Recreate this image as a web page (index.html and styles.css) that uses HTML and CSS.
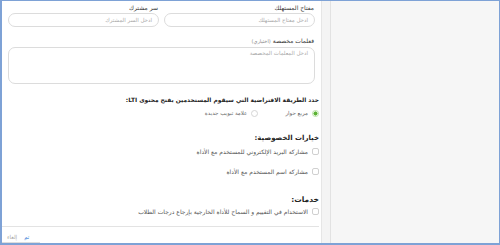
FILE: index.html
```html
<!DOCTYPE html>
<html lang="ar">
<head>
<meta charset="utf-8">
<link rel="stylesheet" href="styles.css">
</head>
<body>
<div class="frame">
  <main class="main" dir="rtl">
    <div class="row">
      <div class="field">
        <label class="label">مفتاح المستهلك</label>
        <div class="input">ادخل مفتاح المستهلك</div>
      </div>
      <div class="field">
        <label class="label">سر مشترك</label>
        <div class="input">ادخل السر المشترك</div>
      </div>
    </div>
    <div class="field wide">
      <label class="label">فعلمات مخصصة <span class="opt">(اختياري)</span></label>
      <div class="textarea">ادخل المعلمات المخصصة</div>
    </div>
    <div class="question">حدد الطريقة الافتراضية التي سيقوم المستخدمين بفتح محتوى LTI:</div>
    <div class="radios">
      <span class="choice"><span class="radio on"></span>مربع حوار</span>
      <span class="choice"><span class="radio"></span>علامة تبويب جديدة</span>
    </div>
    <h3 class="heading">خيارات الخصوصية:</h3>
    <div class="check"><span class="box"></span>مشاركة البريد الإلكتروني للمستخدم مع الأداة</div>
    <div class="check second"><span class="box"></span>مشاركة اسم المستخدم مع الأداة</div>
    <h3 class="heading services">خدمات:</h3>
    <div class="check last"><span class="box"></span>الاستخدام في التقييم و السماح للأداة الخارجية بإرجاع درجات الطلاب</div>
    <div class="footer">
      <span class="done">تم</span>
      <span class="cancel">إلغاء</span>
    </div>
    <div class="hscroll"></div>
  </main>
  <div class="track"></div>
  <aside class="side"></aside>
</div>
</body>
</html>
```
FILE: styles.css
```css
* { box-sizing: border-box; }
html, body { margin: 0; padding: 0; }
body {
  width: 500px;
  height: 245px;
  overflow: hidden;
  font-family: "DejaVu Sans", "Noto Sans", sans-serif;
  background: #fff;
}
.frame {
  width: 500px;
  height: 245px;
  border-top: 1px solid #7ea2d6;
  border-left: 2px solid #7ea2d6;
  border-right: 1px solid #7ea2d6;
  border-bottom: 2px solid #7ea2d6;
  display: flex;
}
.main {
  width: 320px;
  flex: none;
  background: #fff;
  padding: 2px 6px 0 6px;
  position: relative;
  border-right: 1px solid #e6e6e6;
}
.row {
  display: flex;
  gap: 5px;
}
.field { flex: 1; display: flex; flex-direction: column; }
.label {
  font-size: 6px;
  color: #333;
  line-height: 9px;
  padding-right: 1px;
  margin-bottom: 1px;
}
.opt { color: #888; font-size: 5px; }
.input {
  height: 14px;
  border: 1px solid #dcdcdc;
  border-radius: 7px;
  font-size: 5.5px;
  color: #aaa;
  line-height: 12px;
  padding: 0 6px;
}
.wide { margin-top: 9px; }
.textarea {
  height: 37px;
  border: 1px solid #dcdcdc;
  border-radius: 7px;
  font-size: 5.5px;
  color: #aaa;
  line-height: 9px;
  padding: 1px 6px;
}
.question {
  margin-top: 12px;
  margin-right: -4px;
  font-size: 5.9px;
  font-weight: bold;
  color: #222;
  line-height: 9px;
}
.radios {
  display: flex;
  gap: 27px;
  margin-top: 4px;
  margin-right: -4px;
  font-size: 5.5px;
  color: #666;
  line-height: 9px;
}
.choice { display: flex; align-items: center; gap: 4px; }
.radio {
  width: 7px; height: 7px;
  border-radius: 50%;
  border: 1px solid #d5d5d5;
  background: #fff;
}
.radio.on {
  border-color: #b9e2a6;
  background: radial-gradient(circle, #5cb335 0 1.8px, #fff 2.3px);
}
.heading {
  margin: 15px -4px 0 0;
  font-size: 7px;
  font-weight: bold;
  color: #222;
  line-height: 10px;
}
.check {
  display: flex;
  align-items: center;
  gap: 4px;
  margin-top: 4px;
  margin-right: -4px;
  font-size: 6px;
  color: #555;
  line-height: 9px;
}
.check.second { margin-top: 11px; }
.box {
  width: 7px; height: 7px;
  border: 1px solid #d0d0d0;
  border-radius: 2px;
  background: #fff;
}
.services { margin-top: 19px; font-size: 7.5px; }
.check.last {
  margin-top: 2px;
  padding-bottom: 10px;
  border-bottom: 1px solid #e3e3e3;
  margin-left: -6px;
}
.footer {
  display: flex;
  flex-direction: row-reverse;
  justify-content: flex-end;
  direction: ltr;
  gap: 7px;
  padding: 6px 0 0 0;
  margin-left: -1px;
  font-size: 5.5px;
  line-height: 9px;
}
.done { color: #3b7fd8; }
.cancel { color: #aaa; }
.hscroll {
  position: absolute;
  left: 0;
  bottom: 0;
  width: 38px;
  height: 1px;
  background: #ddd;
}
.track {
  width: 9px;
  flex: none;
  background: #f4f4f4;
  border-right: 1px solid #e2e2e2;
}
.side {
  flex: 1;
  background: #f6f6f6;
}
```
